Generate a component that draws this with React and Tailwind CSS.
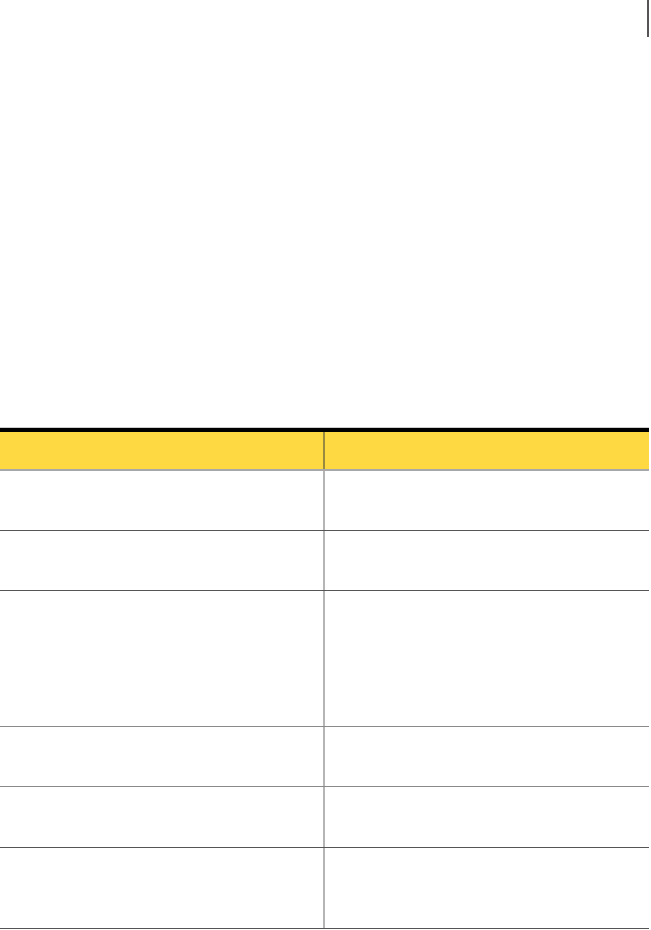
import React from "react";

const rows = [
  { h: "h-[60px]" },
  { h: "h-[60px]" },
  { h: "h-[136px]" },
  { h: "h-[60px]" },
  { h: "h-[61px]" },
  { h: "h-[81px]" },
];

export default function App() {
  return (
    <div className="w-[651px] min-h-[930px] bg-white font-['Liberation_Sans',sans-serif]">
      {/* top area, empty apart from the thin rule at the right edge */}
      <div className="h-[427px] flex justify-end pr-[2px]">
        <div className="w-[2px] h-[37px] bg-[#555]"></div>
      </div>

      {/* table */}
      <div className="w-[649px] border-t border-[#ccc]">
        <div className="h-[4px] bg-black"></div>
        <div className="grid grid-cols-[325px_1fr] h-[39px] bg-[#ffd942] border-b-2 border-[#a8a8a8]">
          <div className="border-r-2 border-[#9a8a40]"></div>
          <div></div>
        </div>
        {rows.map((r, i) => (
          <div
            key={i}
            className={`grid grid-cols-[325px_1fr] ${r.h} border-b ${
              i === 2 || i === 3 ? "border-[#8a8a8a]" : "border-[#555]"
            }`}
          >
            <div className="border-r-2 border-[#b5b5b5]"></div>
            <div></div>
          </div>
        ))}
      </div>
    </div>
  );
}
